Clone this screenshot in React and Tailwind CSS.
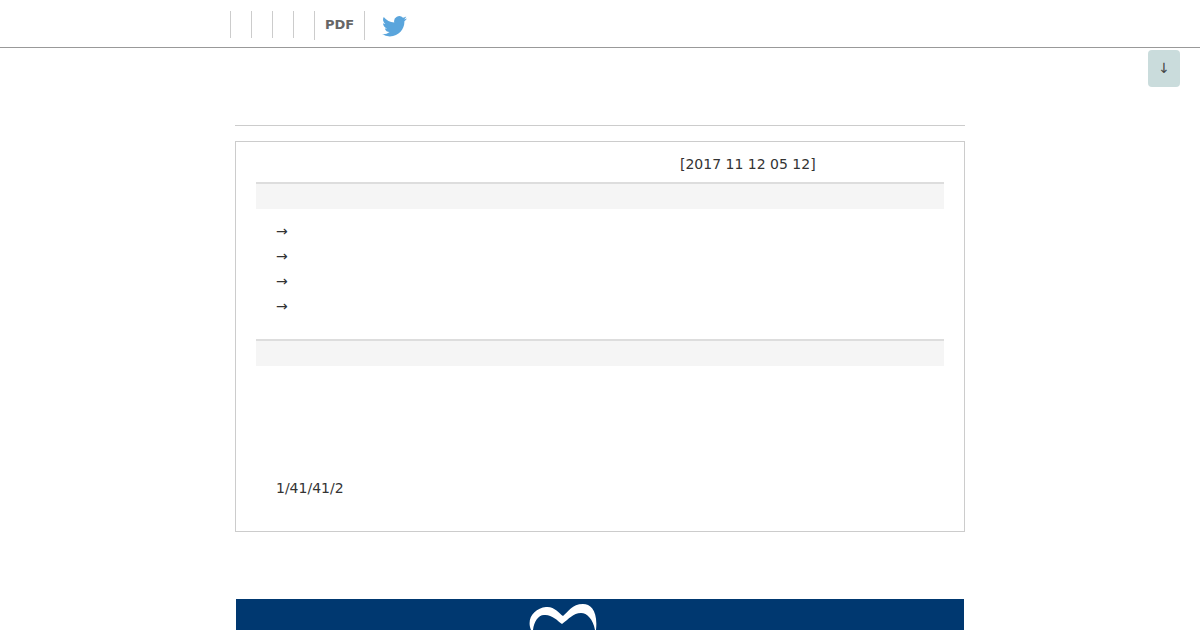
import React from "react";

const Arrow = () => <div className="h-[25px] leading-[25px]">→</div>;

export default function App() {
  return (
    <div className="h-[630px] overflow-hidden bg-white text-[14px] text-[#333] font-['DejaVu_Sans',sans-serif]">
      <header className="h-[48px] border-b border-[#999] flex items-start pl-[230px] pt-[11px]">
        <div className="w-[21px] h-[27px] border-l border-[#ccc]" />
        <div className="w-[21px] h-[27px] border-l border-[#ccc]" />
        <div className="w-[21px] h-[27px] border-l border-[#ccc]" />
        <div className="w-[21px] h-[27px] border-l border-[#ccc]" />
        <div className="w-[51px] h-[29px] border-l border-r border-[#ccc] pl-[10px] text-[13px] font-bold text-[#666] leading-[28px]">PDF</div>
        <svg className="ml-[17px] mt-[5px]" width="25" height="21" viewBox="0 0 24 20" fill="#5aa5dc">
          <path d="M24 2.4a9.8 9.8 0 0 1-2.8.8A4.9 4.9 0 0 0 23.3.5a9.8 9.8 0 0 1-3.1 1.2A4.9 4.9 0 0 0 11.8 6.2 14 14 0 0 1 1.7.9a4.9 4.9 0 0 0 1.5 6.6 4.9 4.9 0 0 1-2.2-.6c0 2.4 1.700 4.400 3.900 4.900a4.900 4.900 0 0 1-2.200.1 4.900 4.900 0 0 0 4.600 3.400A9.900 9.900 0 0 1 0 17.300 14 14 0 0 0 7.500 19.500c9.100 0 14.300-7.700 14-14.600A10 10 0 0 0 24 2.400z" />
        </svg>
      </header>
      <div className="flex justify-end pr-[20px] pt-[2px] h-[39px]">
        <div className="w-[32px] h-[37px] rounded-[4px] bg-[#cadcdc] flex items-center justify-center text-[#444] text-[14px]">↓</div>
      </div>
      <main className="w-[730px] mx-auto">
        <div className="mt-[38px] border-t border-[#ccc]" />
        <section className="mt-[15px] h-[391px] border border-[#ccc] px-[20px]">
          <div className="h-[42px] border-b-2 border-[#ddd] pl-[424px] pt-[12px] leading-[20px]">[2017 11 12 05 12]</div>
          <div className="h-[25px] bg-[#f5f5f5]" />
          <div className="pl-[20px] pt-[10px] h-[130px]">
            <Arrow />
            <Arrow />
            <Arrow />
            <Arrow />
          </div>
          <div className="h-[27px] border-t-2 border-[#ddd] bg-[#f5f5f5]" />
          <div className="pl-[20px] pt-[112px] leading-[20px]">1/41/41/2</div>
        </section>
        <div className="mt-[67px] mx-[1px] h-[60px] bg-[#003870] flex justify-center">
          <svg className="-ml-[75px] mt-[5px]" width="68" height="26" viewBox="0 0 68 26" fill="#fff">
            <path d="M2 26C-3 14 6 4 17 3C25 2 30 9 34 12C39 8 43 0 54 0C62 0 69 7 67 26L66 26C64 15 58 9 52 9C44 9 40 15 33 20C28 16 22 10 15 11C9 11 5 18 4 26Z" />
          </svg>
        </div>
      </main>
    </div>
  );
}
